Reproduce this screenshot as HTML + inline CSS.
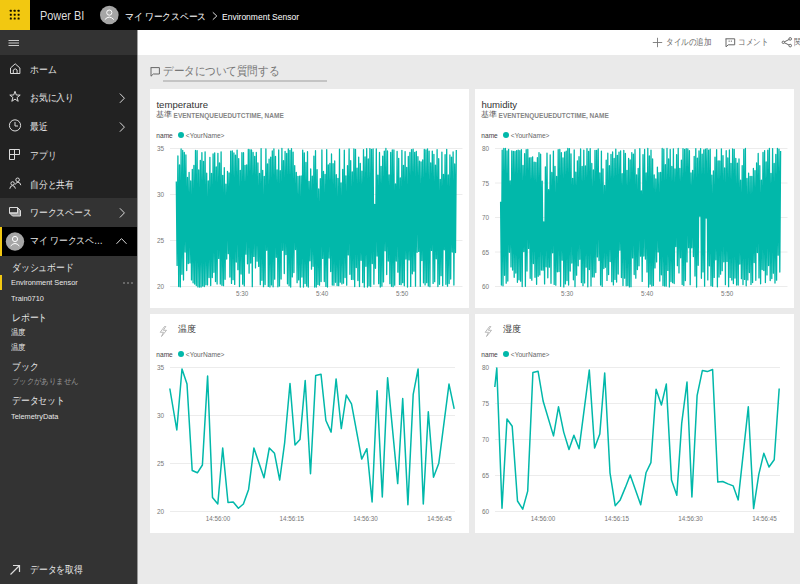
<!DOCTYPE html>
<html><head><meta charset="utf-8">
<style>
*{margin:0;padding:0;box-sizing:border-box}
html,body{width:800px;height:584px;overflow:hidden;background:#eaeaea;font-family:"Liberation Sans",sans-serif}
.a{position:absolute;white-space:nowrap;line-height:1}
.s{transform-origin:0 0}
.nav{color:#e8e8e8;font-size:10px;transform:scaleX(.88);transform-origin:0 0}
.sm{color:#e8e8e8;font-size:8px;transform:scaleX(.92);transform-origin:0 0}
.card{position:absolute;background:#fff}
.sub{font-size:7px;color:#666;transform:scaleX(.95);transform-origin:0 0}
.lg{font-size:6.6px;color:#444}
.lg2{font-size:6.6px;color:#666}
.yl{font-size:6.4px;color:#777}
.xl{font-size:6.3px;color:#777;text-align:center}
.ttl{font-size:9.6px;color:#333}
.tb{font-size:9px;color:#666;transform:scaleX(.84);transform-origin:0 0}
svg.a{overflow:visible}
</style></head><body>
<!-- header -->
<div class="a" style="left:0;top:0;width:800px;height:30px;background:#000"></div>
<div class="a" style="left:0;top:0;width:30px;height:30px;background:#f2c811"></div>
<svg class="a" style="left:0;top:0" width="30" height="30">
<g fill="#141000"><rect x="9.8" y="9.8" width="2" height="2" rx=".4"/><rect x="13.7" y="9.8" width="2" height="2" rx=".4"/><rect x="17.6" y="9.8" width="2" height="2" rx=".4"/><rect x="9.8" y="13.7" width="2" height="2" rx=".4"/><rect x="13.7" y="13.7" width="2" height="2" rx=".4"/><rect x="17.6" y="13.7" width="2" height="2" rx=".4"/><rect x="9.8" y="17.6" width="2" height="2" rx=".4"/><rect x="13.7" y="17.6" width="2" height="2" rx=".4"/><rect x="17.6" y="17.6" width="2" height="2" rx=".4"/></g></svg>
<div class="a s" style="left:39.5px;top:8.5px;color:#dedede;font-size:13px;transform:scaleX(.84)">Power BI</div>
<svg class="a" style="left:100px;top:6px" width="20" height="20"><circle cx="9.3" cy="9" r="9.3" fill="#a6a6a6"/><circle cx="9.3" cy="6.6" r="2.6" fill="none" stroke="#fff" stroke-width="1"/><path d="M4.8 13.6 Q9.3 8.6 13.8 13.6" fill="none" stroke="#fff" stroke-width="1"/></svg>
<div class="a s" style="left:125px;top:11.8px;color:#fff;font-size:9.6px;transform:scaleX(.875)">マイ ワークスペース</div>
<svg class="a" style="left:211px;top:11px" width="8" height="10"><path d="M1.8 1.3 L5.8 5 L1.8 8.7" fill="none" stroke="#ddd" stroke-width="1"/></svg>
<div class="a s" style="left:222px;top:12.8px;color:#fff;font-size:8.6px;transform:scaleX(.99)">Environment Sensor</div>

<!-- sidebar -->
<div class="a" style="left:0;top:30px;width:137px;height:554px;background:#333"></div>
<div class="a" style="left:0;top:55px;width:137px;height:143px;background:#222"></div>
<div class="a" style="left:0;top:227px;width:137px;height:29px;background:#000"></div>
<div class="a" style="left:0;top:227px;width:2px;height:29px;background:#f2c811"></div>
<div class="a" style="left:0;top:275px;width:2px;height:15px;background:#f2c811"></div>
<svg class="a" style="left:0;top:0" width="137" height="584">
<g fill="none" stroke="#dcdcdc" stroke-width="1">
<path d="M8.5 40.5 H19 M8.5 43 H19 M8.5 45.5 H19" stroke-width="0.9"/>
<!-- home -->
<path d="M10.5 73.5 V68 L15.2 63.8 L19.9 68 V73.5 Z M13.3 73.5 V70 Q15.2 67.5 17.1 70 V73.5"/>
<!-- star -->
<path d="M15 91.3 L16.3 95 L20.2 95.1 L17.1 97.5 L18.2 101.3 L15 99.1 L11.8 101.3 L12.9 97.5 L9.8 95.1 L13.7 95 Z"/>
<!-- clock -->
<circle cx="15" cy="125.4" r="5.6"/>
<path d="M15 122 V126 H18"/>
<!-- apps -->
<path d="M9.5 149.5 H19.5 V154.5 H9.5 M9.5 149.5 V159.5 H14.5 V149.5"/>
<!-- shared -->
<circle cx="17.6" cy="179.8" r="1.8"/><path d="M15.2 184.6 Q16.2 182.2 18 182.2 Q20.3 182.4 20.8 185.2"/>
<circle cx="12.6" cy="183.4" r="1.7"/><path d="M9.8 188.8 Q10.2 185.6 12.6 185.6 Q15 185.8 15.4 188.6"/>
<!-- workspace -->
<path d="M17.5 207.5 L20.5 210.5 V216 H12.5 L9.5 213 H17.5 Z" fill="#9a9a9a"/><path d="M9.5 207.5 H17.5 V213 H9.5 Z"/>
<!-- chevrons -->
<path d="M119.9 93.6 L124.4 98.2 L119.9 102.8 M119.9 122.5 L124.4 127.1 L119.9 131.7 M119.9 208.3 L124.4 212.9 L119.9 217.5 M116.5 243.8 L121.5 238.6 L126.5 243.8"/>
<!-- get data arrow -->
<path d="M10.5 574.5 L19.5 565.5 M13 565.5 H19.5 V572" stroke-width="1.2"/>
</g>
<circle cx="15" cy="241.5" r="9.2" fill="#a6a6a6"/>
<circle cx="15" cy="239" r="2.6" fill="none" stroke="#fff" stroke-width="1"/>
<path d="M10.6 246 Q15 241 19.4 246" fill="none" stroke="#fff" stroke-width="1"/>
<g fill="#aaa"><circle cx="124" cy="283" r="0.8"/><circle cx="128" cy="283" r="0.8"/><circle cx="132" cy="283" r="0.8"/></g>
</svg>
<div class="a nav" style="left:30px;top:65px">ホーム</div>
<div class="a nav" style="left:30px;top:93px">お気に入り</div>
<div class="a nav" style="left:30px;top:121.5px">最近</div>
<div class="a nav" style="left:30px;top:150.6px">アプリ</div>
<div class="a nav" style="left:30px;top:179.8px">自分と共有</div>
<div class="a nav" style="left:30px;top:207.5px">ワークスペース</div>
<div class="a nav" style="left:30px;top:236px">マイ ワークスペ…</div>
<div class="a nav" style="left:12px;top:263.2px">ダッシュボード</div>
<div class="a sm" style="left:11.2px;top:279.3px">Environment Sensor</div>
<div class="a sm" style="left:11px;top:294.8px">Train0710</div>
<div class="a nav" style="left:12px;top:312.6px">レポート</div>
<div class="a sm" style="left:11px;top:329px">温度</div>
<div class="a sm" style="left:11px;top:343.5px">温度</div>
<div class="a nav" style="left:12px;top:362px">ブック</div>
<div class="a sm" style="left:11.6px;top:378px;color:#9a9a9a">ブックがありません</div>
<div class="a nav" style="left:12px;top:396px">データセット</div>
<div class="a sm" style="left:11px;top:412.8px">TelemetryData</div>
<div class="a nav" style="left:30px;top:564.5px">データを取得</div>

<!-- toolbar -->
<div class="a" style="left:137px;top:30px;width:663px;height:25px;background:#fff"></div>
<svg class="a" style="left:0;top:0" width="800" height="60">
<g fill="none" stroke="#666" stroke-width="1">
<path d="M657.5 37.8 V47.2 M652.8 42.5 H662.2" stroke="#777" stroke-width=".9"/>
<path d="M725.5 38.8 H734.7 V44.8 H728.3 L726 46.8 V38.8"/>
<path d="M783.5 42.3 L790 39 M783.5 42.3 L790 45.5"/>
<circle cx="783.3" cy="42.3" r="1.2" fill="#fff"/><circle cx="790.2" cy="38.9" r="1.3" fill="#fff"/><circle cx="790.2" cy="45.6" r="1.3" fill="#fff"/>
</g>
<g fill="#666"><rect x="728.6" y="40.6" width="1.1" height="1.1"/><rect x="730.8" y="40.6" width="1.1" height="1.1"/></g>
</svg>
<div class="a tb" style="left:666px;top:38px">タイルの追加</div>
<div class="a tb" style="left:738px;top:38px">コメント</div>
<div class="a tb" style="left:794px;top:38px">関</div>

<div class="a" style="left:137px;top:30px;width:1px;height:554px;background:rgba(51,51,51,.45)"></div>
<!-- Q&A -->
<svg class="a" style="left:0;top:60px" width="170" height="20"><path d="M150.7 7.6 H159.4 V14 H153.3 L151 16.2 V7.6" fill="none" stroke="#666" stroke-width="1"/></svg>
<div class="a s" style="left:163px;top:66px;font-size:11.5px;color:#777;transform:scaleX(.88)">データについて質問する</div>
<div class="a" style="left:163px;top:80px;width:164px;height:1.5px;background:#c4c4c4"></div>

<div class="card" style="left:150px;top:89px;width:319px;height:219px"></div>
<div class="card" style="left:475px;top:89px;width:319px;height:219px"></div>
<div class="card" style="left:150px;top:314px;width:319px;height:219px"></div>
<div class="card" style="left:475px;top:314px;width:319px;height:219px"></div>
<!-- CARDS -->
<div class="a ttl" style="left:156.4px;top:100px">temperature</div>
<div class="a" style="left:156.2px;top:111.2px;font-size:7.6px;color:#555">基準</div><div class="a" style="left:173.6px;top:112.8px;font-size:6.5px;font-weight:bold;color:#858585">EVENTENQUEUEDUTCTIME, NAME</div>
<div class="a lg" style="left:156.3px;top:132.5px">name</div>
<svg class="a" style="left:178px;top:132.3px" width="6" height="6"><circle cx="3" cy="3" r="3" fill="#01b8aa"/></svg>
<div class="a lg2" style="left:185.8px;top:132.5px">&lt;YourName&gt;</div>
<div class="a yl" style="left:157px;top:146.1px">35</div>
<div class="a yl" style="left:157px;top:192.1px">30</div>
<div class="a yl" style="left:157px;top:238.1px">25</div>
<div class="a yl" style="left:157px;top:284.1px">20</div>
<div class="a xl" style="left:217.2px;top:291.4px;width:50px">5:30</div>
<div class="a xl" style="left:297.2px;top:291.4px;width:50px">5:40</div>
<div class="a xl" style="left:377.2px;top:291.4px;width:50px">5:50</div>
<div class="a ttl" style="left:481.4px;top:100px">humidity</div>
<div class="a" style="left:481.2px;top:111.2px;font-size:7.6px;color:#555">基準</div><div class="a" style="left:498.6px;top:112.8px;font-size:6.5px;font-weight:bold;color:#858585">EVENTENQUEUEDUTCTIME, NAME</div>
<div class="a lg" style="left:481.3px;top:132.5px">name</div>
<svg class="a" style="left:503px;top:132.3px" width="6" height="6"><circle cx="3" cy="3" r="3" fill="#01b8aa"/></svg>
<div class="a lg2" style="left:510.8px;top:132.5px">&lt;YourName&gt;</div>
<div class="a yl" style="left:482px;top:146.1px">80</div>
<div class="a yl" style="left:482px;top:180.6px">75</div>
<div class="a yl" style="left:482px;top:215.1px">70</div>
<div class="a yl" style="left:482px;top:249.6px">65</div>
<div class="a yl" style="left:482px;top:284.1px">60</div>
<div class="a xl" style="left:542.2px;top:291.4px;width:50px">5:30</div>
<div class="a xl" style="left:622.2px;top:291.4px;width:50px">5:40</div>
<div class="a xl" style="left:702.2px;top:291.4px;width:50px">5:50</div>
<svg class="a" style="left:159px;top:326px" width="10" height="12"><path d="M5.5 0.5 L1.2 6.3 H4.5 L2.5 10.5 L7.5 4.3 H4.3 L6.8 0.5 Z" fill="none" stroke="#aaa" stroke-width="0.8" stroke-linejoin="round"/></svg>
<div class="a ttl" style="left:177.6px;top:325px;font-size:9.2px">温度</div>
<div class="a lg" style="left:156.3px;top:351.5px">name</div>
<svg class="a" style="left:178px;top:351.3px" width="6" height="6"><circle cx="3" cy="3" r="3" fill="#01b8aa"/></svg>
<div class="a lg2" style="left:185.8px;top:351.5px">&lt;YourName&gt;</div>
<div class="a yl" style="left:157px;top:365.1px">35</div>
<div class="a yl" style="left:157px;top:413.1px">30</div>
<div class="a yl" style="left:157px;top:461.1px">25</div>
<div class="a yl" style="left:157px;top:509.1px">20</div>
<div class="a xl" style="left:193px;top:515.7px;width:50px">14:56:00</div>
<div class="a xl" style="left:266.8px;top:515.7px;width:50px">14:56:15</div>
<div class="a xl" style="left:340.5px;top:515.7px;width:50px">14:56:30</div>
<div class="a xl" style="left:414.6px;top:515.7px;width:50px">14:56:45</div>
<svg class="a" style="left:484px;top:326px" width="10" height="12"><path d="M5.5 0.5 L1.2 6.3 H4.5 L2.5 10.5 L7.5 4.3 H4.3 L6.8 0.5 Z" fill="none" stroke="#aaa" stroke-width="0.8" stroke-linejoin="round"/></svg>
<div class="a ttl" style="left:502.6px;top:325px;font-size:9.2px">湿度</div>
<div class="a lg" style="left:481.3px;top:351.5px">name</div>
<svg class="a" style="left:503px;top:351.3px" width="6" height="6"><circle cx="3" cy="3" r="3" fill="#01b8aa"/></svg>
<div class="a lg2" style="left:510.8px;top:351.5px">&lt;YourName&gt;</div>
<div class="a yl" style="left:482px;top:365.1px">80</div>
<div class="a yl" style="left:482px;top:401.1px">75</div>
<div class="a yl" style="left:482px;top:437.1px">70</div>
<div class="a yl" style="left:482px;top:473.1px">65</div>
<div class="a yl" style="left:482px;top:509.1px">60</div>
<div class="a xl" style="left:518px;top:515.7px;width:50px">14:56:00</div>
<div class="a xl" style="left:591.8px;top:515.7px;width:50px">14:56:15</div>
<div class="a xl" style="left:665.5px;top:515.7px;width:50px">14:56:30</div>
<div class="a xl" style="left:739.6px;top:515.7px;width:50px">14:56:45</div>
<svg class="a" style="left:0;top:0" width="800" height="584">
<g stroke="#ececec" stroke-width="1">
<path d="M170 148.5 H462.5 M170 194.5 H462.5 M170 240.5 H462.5 M170 286.5 H462.5"/>
<path d="M495 148.5 H787.5 M495 183 H787.5 M495 217.5 H787.5 M495 252 H787.5 M495 286.5 H787.5"/>
<path d="M170 367.5 H455 M170 415.5 H455 M170 463.5 H455 M170 511.5 H455"/>
<path d="M495 367.5 H780 M495 403.5 H780 M495 439.5 H780 M495 475.5 H780 M495 511.5 H780"/>
</g>
<g fill="none" stroke="#01b8aa" stroke-width="1.5" stroke-linejoin="round">
<path d="M176.30 181.4 L177.10 265.4 L177.90 156.0 L178.70 286.5 L179.50 164.8 L180.30 286.9 L181.10 148.9 L181.90 274.3 L182.70 150.4 L183.50 280.0 L184.30 152.5 L185.10 252.1 L185.90 155.0 L186.70 270.6 L187.50 177.4 L188.30 263.5 L189.10 172.3 L189.90 262.9 L190.70 180.9 L191.50 279.9 L192.30 169.3 L193.10 282.8 L193.90 165.5 L194.70 284.0 L195.50 150.5 L196.30 285.5 L197.10 150.6 L197.90 286.9 L198.70 170.0 L199.50 287.0 L200.30 160.4 L201.10 287.0 L201.90 152.6 L202.70 286.1 L203.50 161.3 L204.30 286.5 L205.10 151.8 L205.90 284.8 L206.70 173.2 L207.50 284.9 L208.30 181.0 L209.10 277.5 L209.90 157.3 L210.70 285.6 L211.50 173.3 L212.30 277.5 L213.10 154.0 L213.90 272.3 L214.70 152.8 L215.50 281.5 L216.30 167.0 L217.10 284.1 L217.90 153.3 L218.70 258.4 L219.50 163.0 L220.30 284.0 L221.10 151.8 L221.90 285.3 L222.70 175.3 L223.50 285.7 L224.30 167.7 L225.10 279.3 L225.90 184.2 L226.70 259.1 L227.50 171.3 L228.30 253.7 L229.10 172.9 L229.90 277.1 L230.70 151.1 L231.50 283.4 L232.30 150.8 L233.10 279.7 L233.90 153.0 L234.70 284.4 L235.50 155.2 L236.30 262.0 L237.10 150.1 L237.90 269.7 L238.70 158.6 L239.50 286.5 L240.30 170.3 L241.10 274.1 L241.90 152.7 L242.70 284.2 L243.50 152.7 L244.30 285.9 L245.10 165.3 L245.90 254.2 L246.70 164.8 L247.50 263.8 L248.30 149.4 L249.10 273.2 L249.90 149.6 L250.70 263.1 L251.50 150.0 L252.30 286.7 L253.10 152.4 L253.90 256.4 L254.70 156.4 L255.50 267.9 L256.30 152.5 L257.10 261.2 L257.90 162.9 L258.70 266.4 L259.50 173.3 L260.30 284.7 L261.10 148.6 L261.90 280.3 L262.70 170.3 L263.50 286.7 L264.30 176.4 L265.10 284.5 L265.90 149.0 L266.70 250.3 L267.50 164.0 L268.30 286.4 L269.10 159.2 L269.90 286.9 L270.70 157.1 L271.50 284.9 L272.30 151.0 L273.10 286.8 L273.90 148.8 L274.70 279.2 L275.50 156.5 L276.30 257.3 L277.10 169.8 L277.90 286.8 L278.70 150.0 L279.50 286.1 L280.30 170.7 L281.10 279.1 L281.90 148.5 L282.70 250.3 L283.50 160.6 L284.30 273.5 L285.10 151.4 L285.90 254.5 L286.70 153.5 L287.50 283.8 L288.30 148.9 L289.10 285.8 L289.90 150.5 L290.70 287.0 L291.50 148.7 L292.30 276.9 L293.10 152.1 L293.90 272.6 L294.70 165.6 L295.50 249.5 L296.30 172.5 L297.10 282.7 L297.90 176.3 L298.70 279.9 L299.50 176.2 L300.30 287.0 L301.10 175.9 L301.90 277.0 L302.70 150.1 L303.50 287.0 L304.30 152.9 L305.10 283.6 L305.90 162.5 L306.70 286.1 L307.50 151.7 L308.30 287.0 L309.10 181.4 L309.90 260.8 L310.70 169.0 L311.50 269.2 L312.30 176.1 L313.10 266.3 L313.90 156.1 L314.70 287.0 L315.50 150.7 L316.30 287.0 L317.10 169.7 L317.90 284.4 L318.70 188.9 L319.50 285.2 L320.30 178.6 L321.10 281.6 L321.90 150.0 L322.70 258.4 L323.50 171.5 L324.30 281.6 L325.10 174.5 L325.90 286.4 L326.70 149.6 L327.50 287.0 L328.30 164.8 L329.10 258.1 L329.90 163.5 L330.70 271.6 L331.50 153.9 L332.30 285.0 L333.10 163.7 L333.90 285.2 L334.70 160.9 L335.50 282.3 L336.30 174.7 L337.10 285.5 L337.90 178.3 L338.70 285.7 L339.50 149.1 L340.30 282.2 L341.10 182.8 L341.90 283.9 L342.70 169.4 L343.50 283.2 L344.30 150.2 L345.10 277.5 L345.90 175.8 L346.70 285.2 L347.50 165.6 L348.30 254.9 L349.10 148.9 L349.90 274.3 L350.70 160.6 L351.50 279.4 L352.30 171.8 L353.10 279.6 L353.90 148.9 L354.70 286.6 L355.50 149.3 L356.30 267.5 L357.10 168.1 L357.90 280.6 L358.70 157.2 L359.50 286.6 L360.30 163.5 L361.10 260.3 L361.90 171.1 L362.70 282.6 L363.50 149.6 L364.30 287.0 L365.10 156.8 L365.90 266.3 L366.70 148.7 L367.50 287.0 L368.30 158.9 L369.10 285.8 L369.90 148.6 L370.70 286.6 L371.50 149.3 L372.30 263.5 L373.10 149.0 L373.90 284.2 L374.70 204.4 L375.50 268.3 L376.30 149.0 L377.10 256.1 L377.90 175.1 L378.70 283.7 L379.50 152.4 L380.30 287.0 L381.10 166.3 L381.90 286.2 L382.70 156.2 L383.50 281.9 L384.30 151.1 L385.10 250.8 L385.90 148.5 L386.70 274.6 L387.50 151.0 L388.30 261.0 L389.10 174.8 L389.90 283.7 L390.70 152.4 L391.50 286.3 L392.30 149.9 L393.10 286.7 L393.90 149.9 L394.70 285.2 L395.50 184.0 L396.30 261.1 L397.10 151.5 L397.90 272.2 L398.70 158.3 L399.50 284.4 L400.30 177.8 L401.10 284.7 L401.90 150.3 L402.70 282.7 L403.50 165.3 L404.30 285.8 L405.10 151.6 L405.90 259.0 L406.70 167.5 L407.50 287.0 L408.30 156.5 L409.10 259.9 L409.90 152.4 L410.70 286.4 L411.50 149.6 L412.30 273.8 L413.10 149.2 L413.90 271.2 L414.70 152.3 L415.50 286.2 L416.30 151.4 L417.10 252.3 L417.90 156.7 L418.70 251.4 L419.50 161.2 L420.30 286.3 L421.10 161.8 L421.90 260.6 L422.70 159.9 L423.50 282.8 L424.30 149.4 L425.10 284.9 L425.90 149.8 L426.70 282.7 L427.50 148.8 L428.30 286.1 L429.10 151.1 L429.90 286.7 L430.70 162.8 L431.50 250.4 L432.30 151.1 L433.10 283.4 L433.90 154.3 L434.70 281.7 L435.50 165.1 L436.30 258.8 L437.10 149.6 L437.90 286.5 L438.70 158.7 L439.50 284.3 L440.30 179.4 L441.10 275.7 L441.90 152.1 L442.70 285.7 L443.50 174.3 L444.30 249.8 L445.10 154.7 L445.90 284.3 L446.70 149.3 L447.50 286.2 L448.30 175.0 L449.10 283.6 L449.90 155.0 L450.70 279.0 L451.50 157.1 L452.30 252.0 L453.10 151.8 L453.90 285.1 L454.70 164.0 L455.50 252.5 L456.30 150.1" stroke-width="1.3"/>
<path d="M500.60 201.8 L501.40 285.0 L502.20 150.1 L503.00 285.8 L503.80 148.5 L504.60 275.3 L505.40 148.5 L506.20 283.2 L507.00 151.0 L507.80 281.1 L508.60 149.3 L509.40 252.3 L510.20 180.8 L511.00 266.9 L511.80 151.0 L512.60 270.1 L513.40 151.5 L514.20 277.3 L515.00 151.4 L515.80 273.1 L516.60 150.6 L517.40 282.3 L518.20 150.1 L519.00 279.8 L519.80 150.6 L520.60 281.2 L521.40 149.6 L522.20 286.6 L523.00 165.4 L523.80 251.6 L524.60 153.7 L525.40 286.3 L526.20 149.7 L527.00 271.1 L527.80 149.5 L528.60 248.4 L529.40 157.8 L530.20 278.3 L531.00 157.7 L531.80 280.2 L532.60 156.8 L533.40 263.6 L534.20 162.1 L535.00 277.3 L535.80 162.5 L536.60 284.3 L537.40 157.7 L538.20 276.3 L539.00 152.6 L539.80 274.9 L540.60 154.2 L541.40 270.0 L542.20 181.1 L543.00 270.2 L543.80 222.0 L544.60 283.9 L545.40 166.8 L546.20 266.8 L547.00 153.1 L547.80 277.8 L548.60 189.7 L549.40 267.2 L550.20 154.8 L551.00 283.3 L551.80 172.5 L552.60 252.8 L553.40 151.2 L554.20 284.4 L555.00 166.3 L555.80 285.2 L556.60 176.4 L557.40 271.8 L558.20 149.7 L559.00 271.5 L559.80 149.4 L560.60 286.3 L561.40 152.6 L562.20 260.2 L563.00 158.0 L563.80 286.9 L564.60 152.1 L565.40 283.9 L566.20 151.1 L567.00 280.5 L567.80 148.5 L568.60 285.1 L569.40 148.6 L570.20 271.0 L571.00 153.8 L571.80 263.1 L572.60 178.3 L573.40 279.8 L574.20 150.0 L575.00 286.6 L575.80 172.2 L576.60 275.2 L577.40 160.8 L578.20 265.8 L579.00 156.7 L579.80 259.3 L580.60 148.9 L581.40 282.6 L582.20 166.4 L583.00 285.7 L583.80 150.1 L584.60 282.9 L585.40 166.0 L586.20 267.2 L587.00 148.6 L587.80 286.8 L588.60 151.4 L589.40 269.6 L590.20 148.7 L591.00 286.1 L591.80 163.4 L592.60 276.9 L593.40 170.0 L594.20 277.1 L595.00 150.3 L595.80 272.6 L596.60 150.3 L597.40 256.9 L598.20 148.8 L599.00 260.5 L599.80 172.9 L600.60 285.1 L601.40 151.2 L602.20 286.4 L603.00 168.9 L603.80 268.6 L604.60 185.5 L605.40 267.3 L606.20 160.2 L607.00 280.4 L607.80 153.2 L608.60 274.6 L609.40 165.7 L610.20 261.6 L611.00 154.4 L611.80 281.7 L612.60 151.9 L613.40 284.9 L614.20 158.4 L615.00 279.4 L615.80 149.1 L616.60 282.1 L617.40 155.3 L618.20 274.0 L619.00 152.1 L619.80 250.2 L620.60 150.8 L621.40 277.6 L622.20 173.7 L623.00 285.6 L623.80 150.3 L624.60 278.2 L625.40 153.4 L626.20 285.8 L627.00 170.3 L627.80 285.5 L628.60 158.5 L629.40 286.9 L630.20 159.9 L631.00 286.7 L631.80 152.6 L632.60 257.9 L633.40 154.2 L634.20 274.5 L635.00 149.6 L635.80 278.2 L636.60 174.8 L637.40 269.5 L638.20 168.5 L639.00 265.8 L639.80 148.6 L640.60 256.2 L641.40 190.8 L642.20 281.4 L643.00 154.6 L643.80 256.1 L644.60 149.5 L645.40 259.0 L646.20 172.9 L647.00 272.1 L647.80 148.5 L648.60 287.0 L649.40 155.9 L650.20 284.2 L651.00 150.1 L651.80 286.0 L652.60 159.0 L653.40 285.6 L654.20 174.8 L655.00 267.9 L655.80 178.9 L656.60 261.9 L657.40 167.2 L658.20 251.9 L659.00 172.7 L659.80 281.1 L660.60 172.3 L661.40 274.8 L662.20 148.5 L663.00 285.5 L663.80 149.2 L664.60 286.0 L665.40 164.7 L666.20 286.2 L667.00 148.5 L667.80 270.4 L668.60 159.0 L669.40 286.9 L670.20 149.4 L671.00 281.6 L671.80 166.4 L672.60 282.7 L673.40 148.8 L674.20 283.5 L675.00 168.9 L675.80 246.5 L676.60 154.7 L677.40 265.7 L678.20 148.5 L679.00 272.9 L679.80 168.5 L680.60 257.8 L681.40 160.2 L682.20 284.6 L683.00 148.6 L683.80 285.6 L684.60 149.4 L685.40 280.6 L686.20 148.6 L687.00 261.9 L687.80 148.8 L688.60 247.7 L689.40 150.6 L690.20 284.7 L691.00 173.0 L691.80 247.8 L692.60 170.3 L693.40 256.5 L694.20 156.5 L695.00 276.1 L695.80 148.6 L696.60 287.0 L697.40 158.1 L698.20 265.3 L699.00 150.8 L699.80 216.2 L700.60 148.6 L701.40 278.3 L702.20 154.2 L703.00 271.9 L703.80 149.8 L704.60 286.2 L705.40 149.2 L706.20 218.1 L707.00 148.6 L707.80 279.9 L708.60 150.2 L709.40 265.8 L710.20 149.2 L711.00 285.7 L711.80 175.1 L712.60 286.3 L713.40 171.0 L714.20 277.4 L715.00 157.2 L715.80 259.8 L716.60 149.6 L717.40 286.8 L718.20 160.8 L719.00 277.1 L719.80 161.0 L720.60 274.2 L721.40 148.8 L722.20 270.7 L723.00 155.6 L723.80 261.8 L724.60 167.9 L725.40 284.7 L726.20 150.7 L727.00 261.4 L727.80 157.8 L728.60 286.7 L729.40 150.0 L730.20 277.4 L731.00 163.3 L731.80 280.0 L732.60 149.0 L733.40 283.5 L734.20 149.3 L735.00 278.1 L735.80 158.3 L736.60 285.1 L737.40 163.2 L738.20 285.0 L739.00 159.0 L739.80 264.1 L740.60 180.2 L741.40 278.7 L742.20 165.6 L743.00 284.6 L743.80 149.4 L744.60 279.4 L745.40 148.5 L746.20 285.8 L747.00 178.4 L747.80 279.9 L748.60 173.1 L749.40 272.5 L750.20 176.3 L751.00 284.4 L751.80 176.3 L752.60 282.5 L753.40 168.5 L754.20 262.5 L755.00 170.6 L755.80 280.3 L756.60 162.9 L757.40 252.5 L758.20 153.5 L759.00 277.9 L759.80 165.7 L760.60 283.8 L761.40 180.1 L762.20 269.5 L763.00 152.4 L763.80 270.6 L764.60 150.6 L765.40 282.6 L766.20 161.9 L767.00 274.9 L767.80 150.2 L768.60 265.5 L769.40 148.5 L770.20 280.6 L771.00 173.4 L771.80 278.6 L772.60 148.6 L773.40 273.2 L774.20 163.5 L775.00 283.1 L775.80 154.5 L776.60 280.2 L777.40 148.5 L778.20 255.2 L779.00 149.1 L779.80 272.1 L780.60 151.0" stroke-width="1.3"/>
<path d="M169.8 388.5 L176.8 430.0 L182.0 369.0 L187.0 384.0 L192.2 470.5 L197.4 472.8 L202.4 465.0 L207.6 376.0 L212.5 497.5 L217.8 504.0 L222.7 448.0 L228.0 502.5 L233.2 502.0 L238.4 508.3 L243.4 504.0 L248.6 489.4 L253.9 448.0 L264.0 477.8 L269.3 448.0 L274.5 453.3 L279.7 480.0 L284.7 442.3 L290.0 383.5 L295.0 445.0 L300.0 439.4 L305.2 380.6 L310.5 473.7 L315.7 375.4 L321.0 374.2 L325.9 420.5 L331.1 432.1 L336.1 378.9 L341.3 428.6 L346.3 395.1 L351.5 403.9 L361.7 459.1 L366.9 448.7 L372.1 501.9 L377.1 390.8 L382.3 497.0 L387.6 377.7 L397.7 483.6 L402.7 398.6 L407.9 504.8 L413.2 394.3 L418.1 369.0 L423.3 504.0 L428.3 411.7 L433.5 477.2 L438.8 463.2 L449.0 384.1 L454.2 408.8"/>
<path d="M494.8 387.0 L496.8 368.1 L502.0 508.3 L507.0 419.0 L512.2 426.3 L517.5 501.0 L522.7 509.2 L527.7 491.1 L532.9 372.5 L538.1 371.3 L543.1 401.0 L553.5 435.9 L558.5 406.8 L563.7 432.1 L569.0 449.5 L573.9 435.3 L579.1 448.7 L589.3 370.1 L594.6 448.1 L599.8 434.1 L604.7 373.0 L610.0 472.8 L615.2 505.7 L620.2 499.9 L625.4 487.4 L630.2 474.9 L635.5 490.0 L640.7 504.8 L646.0 472.8 L650.9 462.6 L656.1 389.3 L661.4 405.0 L666.3 384.1 L671.5 480.1 L676.8 495.2 L681.7 423.4 L687.0 382.0 L691.9 497.0 L697.1 395.7 L702.4 370.4 L707.3 371.6 L712.6 369.5 L717.8 482.1 L722.7 481.5 L728.0 483.9 L733.2 485.9 L738.2 499.9 L748.3 406.8 L753.6 508.6 L758.8 474.3 L763.8 453.3 L769.0 467.0 L774.2 459.7 L779.2 388.5"/>
</g>
</svg>
</body></html>
